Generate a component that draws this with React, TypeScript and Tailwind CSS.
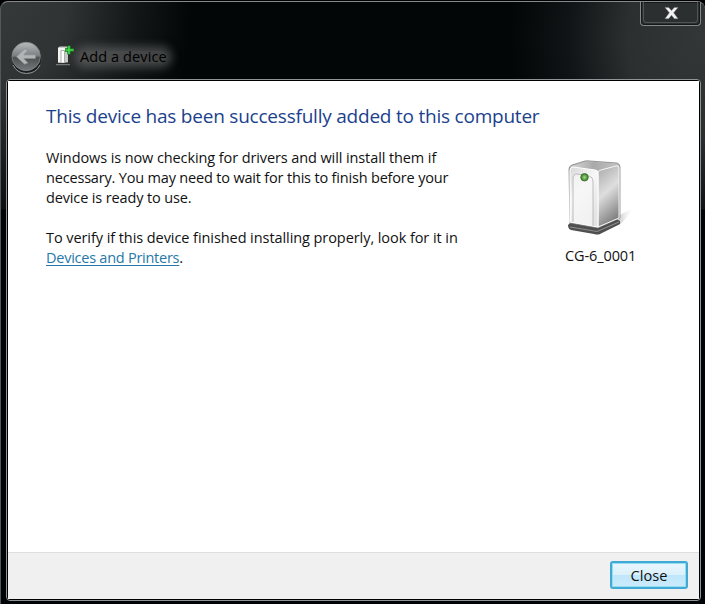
import React from "react";

function BackIcon() {
  return (
    <svg width="33" height="33" viewBox="0 0 33 33" className="shrink-0">
      <defs>
        <linearGradient id="orb" x1="0" y1="0" x2="0" y2="1">
          <stop offset="0" stopColor="#b9bcbd" />
          <stop offset="0.48" stopColor="#7b7e80" />
          <stop offset="0.54" stopColor="#4d5052" />
          <stop offset="1" stopColor="#777a7c" />
        </linearGradient>
      </defs>
      <circle cx="16.5" cy="17" r="15.4" fill="#17191a" stroke="#484c4e" strokeWidth="0.7" />
      <path d="M3 24 A15 15 0 0 0 30 24" fill="none" stroke="#909496" strokeWidth="1" />
      <circle cx="16.2" cy="15.5" r="14.2" fill="url(#orb)" stroke="#85898b" strokeWidth="0.8" />
      <path
        d="M6.5 15.7 L14.5 8 L18 9.3 L13.8 13.8 H25.5 V17.5 H13.8 L18 22 L14.5 23.3 Z"
        fill="#b2b5b6"
        stroke="#85898b"
        strokeWidth="0.7"
      />
    </svg>
  );
}

function AddDeviceIcon() {
  return (
    <svg width="19" height="22" viewBox="0 0 19 22" className="shrink-0">
      <path d="M2 2.5 L4 1.5 H12 V17.5 H2 Z" fill="#c9cbc9" />
      <path d="M2 3 H9 V17.5 H2 Z" fill="#f1f2f1" />
      <path d="M5 17.5 V5.5 H8.5 V17.5" fill="#fff" stroke="#969996" strokeWidth="0.8" />
      <path d="M0 19.7 H14" stroke="#85898a" strokeWidth="1" />
      <path d="M13 0.5 V9.5 M9 5 H18" stroke="#12791a" strokeWidth="3.4" />
      <path d="M13 1 V9 M9.5 5 H17.5" stroke="#48df4b" strokeWidth="1.6" />
    </svg>
  );
}

function DeviceIcon() {
  return (
    <svg width="74" height="80" viewBox="0 0 74 80" className="block">
      <defs>
        <linearGradient id="front" x1="0" y1="0" x2="0.5" y2="1">
          <stop offset="0" stopColor="#d8d8d8" />
          <stop offset="0.45" stopColor="#f7f7f7" />
          <stop offset="1" stopColor="#e4e4e4" />
        </linearGradient>
        <linearGradient id="side" x1="0" y1="0" x2="0.3" y2="1">
          <stop offset="0" stopColor="#a8a8a8" />
          <stop offset="0.5" stopColor="#dedede" />
          <stop offset="1" stopColor="#858585" />
        </linearGradient>
        <linearGradient id="top" x1="0" y1="0" x2="1" y2="0">
          <stop offset="0" stopColor="#d9d9d9" />
          <stop offset="0.5" stopColor="#a9a9a9" />
          <stop offset="1" stopColor="#c4c4c4" />
        </linearGradient>
        <linearGradient id="shade" x1="0" y1="0" x2="1" y2="0">
          <stop offset="0" stopColor="#aaa" />
          <stop offset="1" stopColor="#fff" stopOpacity="0" />
        </linearGradient>
        <radialGradient id="lamp">
          <stop offset="0" stopColor="#a5df83" />
          <stop offset="0.6" stopColor="#5ca343" />
          <stop offset="1" stopColor="#2f6923" />
        </radialGradient>
      </defs>
      <g transform="translate(1 0)">
        <path d="M54 60 L73 50 L60 66 L52 70 Z" fill="url(#shade)" />
        <path d="M6 68 L9 65 L54 62 L58 64 V67 L38 77 Q36 78 32 77 L9 73 Q6 72 6 68 Z" fill="#4f4f4f" />
        <path d="M8 70 L35 74.5 L57 65" fill="none" stroke="#8d8d8d" strokeWidth="1.2" />
        <path d="M7 12 Q7 9 10 8 L23 4 Q25 3.5 28 4 L55 6 Q58 7 58 10 V61 L36 71 L8 66 Z" fill="#bdbdbd" stroke="#777" strokeWidth="0.7" />
        <path d="M8 10 L25 4.5 L56 7 L38 13 Z" fill="url(#top)" />
        <path d="M36 16 Q36 14 39 13 L54 9 Q57 8 57 11 V61 L36 70 Z" fill="url(#side)" stroke="#f5f5f5" strokeWidth="1" />
        <path d="M8 14 Q8 10 11 10 L33 13 Q36 13 36 17 V70 L8 65 Z" fill="url(#front)" stroke="#fff" strokeWidth="1" />
        <path d="M11 65 V22 Q11 17 15 17 L27 19 Q31 20 31 24 V69" fill="#f6f6f6" fillOpacity="0.7" stroke="#b0b0b0" strokeWidth="0.8" />
        <circle cx="22.5" cy="20.3" r="3.8" fill="url(#lamp)" stroke="#416e36" strokeWidth="0.7" />
      </g>
    </svg>
  );
}

export default function App() {
  return (
    <div className="h-[604px] w-[705px] overflow-hidden bg-black pt-px font-['Open_Sans','Noto_Sans',sans-serif] text-[14.5px] text-[#111]">
      <div className="flex h-full w-full flex-col rounded-t-lg border-t border-l border-t-[#85898b] border-l-[#54585a] bg-[linear-gradient(transparent_207px,#000407_208px),radial-gradient(ellipse_190px_250px_at_0_0,#36393a_0%,#303334_35%,#121617_72%,transparent_100%),radial-gradient(ellipse_195px_240px_at_100%_35px,#343738_0%,#2b2f30_40%,#101416_70%,transparent_100%),linear-gradient(#020607,#020607)] pl-[5px]">
        <header className="flex h-[77px] shrink-0 justify-between">
          <div className="flex items-start pt-[39px] pl-1">
            <BackIcon />
            <div className="mt-[4px] ml-[13px]"><AddDeviceIcon /></div>
            <span className="mt-[10px] ml-[5px] rounded-full bg-[#777]/50 text-[14.5px] leading-[12px] tracking-[0.1px] text-black shadow-[0_0_8px_5px_rgba(119,119,119,0.5)]">Add a device</span>
          </div>
          <button aria-label="Close window" className="mr-[4px] flex h-[24px] w-[61px] items-center justify-center rounded-b border border-t-0 border-[#85898b] bg-[#2b2f30] p-[2px] pt-0 shadow-[inset_0_0_0_1px_#151819]">
            <span className="flex h-full w-full items-center justify-center rounded-b-sm border border-t-0 border-[#505456] pt-[2px] pl-px">
              <svg width="15" height="14" viewBox="0 0 16 14"><path d="M1 1 H5 L8 4.4 L11 1 H15 L10.3 6.8 L15 13 H11 L8 9.3 L5 13 H1 L5.7 6.8 Z" fill="#f2f2f2" stroke="#777" strokeWidth="0.5" /></svg>
            </span>
          </button>
        </header>
        <div className="h-[522px] w-[695px] shrink-0 rounded-sm border border-[#909496] bg-black p-px">
          <div className="flex h-full flex-col bg-white">
            <main className="flex h-[471px] shrink-0 pl-[38px]">
              <div className="w-[515px] pt-[22px]">
                <h1 className="text-[19px] leading-[26px] tracking-[-0.22px] whitespace-nowrap text-[#1b418d]">This device has been successfully added to this computer</h1>
                <div className="mt-[19px] leading-[20px] whitespace-nowrap">
                  <p className="tracking-[-0.1px]">Windows is now checking for drivers and will install them if</p>
                  <p className="tracking-[-0.18px]">necessary. You may need to wait for this to finish before your</p>
                  <p className="tracking-[-0.14px]">device is ready to use.</p>
                  <p className="mt-5 tracking-[-0.07px]">To verify if this device finished installing properly, look for it in</p>
                  <p className="tracking-[-0.25px]"><a href="#" className="text-[#2678a8] underline underline-offset-2">Devices and Printers</a>.</p>
                </div>
              </div>
              <aside className="pt-[76px]">
                <DeviceIcon />
                <div className="mt-[9px] ml-[4px] leading-[20px] tracking-[-0.1px] whitespace-nowrap">CG-6_0001</div>
              </aside>
            </main>
            <footer className="flex grow items-start justify-end border-t border-[#dedede] bg-[#f0f0f0] pt-[8px] pr-[11px]">
              <button className="h-[28px] w-[78px] rounded-[3px] border-2 border-[#41a9d4] bg-[linear-gradient(#e9f6fd_0%,#dcf1fb_48%,#bee6fb_50%,#ccebfb_100%)] text-[14.6px] leading-none shadow-[inset_0_0_0_1px_#93def5]">Close</button>
            </footer>
          </div>
        </div>
      </div>
    </div>
  );
}
